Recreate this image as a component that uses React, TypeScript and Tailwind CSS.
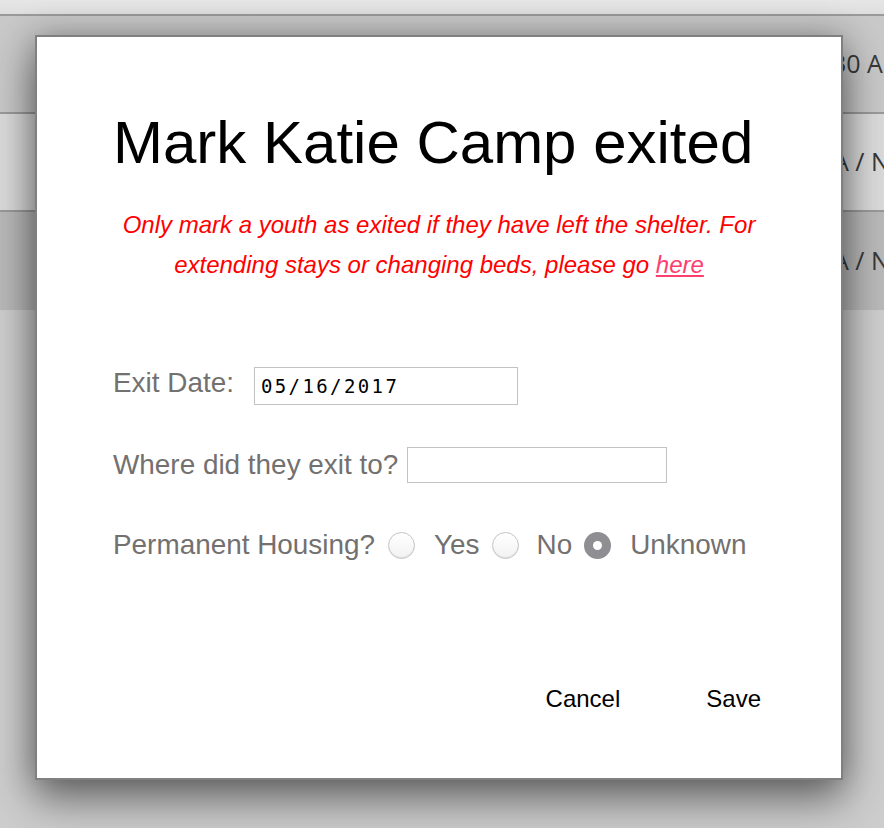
import React from "react";

function Radio({ checked }: { checked?: boolean }) {
  if (checked) {
    return (
      <span className="flex h-[27px] w-[27px] shrink-0 items-center justify-center rounded-full bg-[#8e8e93]">
        <span className="h-[9px] w-[9px] rounded-full bg-white" />
      </span>
    );
  }
  return (
    <span className="block h-[27px] w-[27px] shrink-0 rounded-full border border-[#c4c4c4] bg-gradient-to-b from-white to-[#f2f2f2] shadow-[inset_0_-1px_1px_rgba(0,0,0,0.08)]" />
  );
}

export default function App() {
  const bgText = "font-['Open_Sans',sans-serif] text-[25px] text-[#383838] whitespace-nowrap";
  return (
    <div className="relative h-[828px] w-[884px] overflow-hidden bg-[#cdcdcd] font-['Liberation_Sans',Arial,sans-serif]">
      {/* page behind overlay */}
      <div className="h-[14px] bg-gradient-to-b from-[#e6e6e6] to-[#dedede]" />
      <div className="h-[2px] bg-[#9a9a9a]" />
      <div className={`flex h-[96px] items-center bg-[#c8c8c8] pl-[832px] ${bgText}`}>30 AM</div>
      <div className="h-[2px] bg-[#9a9a9a]" />
      <div className={`flex h-[96px] items-center bg-[#dadada] pl-[805px] ${bgText}`}>N/A / N/A</div>
      <div className="h-[2px] bg-[#9a9a9a]" />
      <div className={`flex h-[98px] items-center bg-[#b9b9b9] pl-[805px] ${bgText}`}>N/A / N/A</div>
      <div className="h-[518px] bg-[#cdcdcd]" />

      {/* modal */}
      <div className="absolute left-[35px] top-[35px] flex h-[745px] w-[808px] flex-col border-2 border-[#808080] bg-white px-[76px] pt-[72px] shadow-[0_0_30px_rgba(0,0,0,0.25),0_20px_40px_rgba(0,0,0,0.45)]">
        <h1 className="text-[60px] leading-[68px] text-black">Mark Katie Camp exited</h1>
        <p className="mt-[28px] text-center text-[24px] italic leading-[40px] text-[#ff0000]">
          Only mark a youth as exited if they have left the shelter. For extending stays or changing beds, please go{" "}
          <a href="#" className="text-[#ff3d6e] underline">
            here
          </a>
        </p>

        <div className="mt-[81px] flex h-[40px] items-center text-[27.9px] leading-[32px] text-[#737070]">
          <span className="pb-[6px]">Exit Date:</span>
          <input
            readOnly
            value="05/16/2017"
            className="ml-[20px] h-[38px] w-[264px] border border-[#c2c2c2] bg-white pl-[6px] font-['DejaVu_Sans_Mono',monospace] text-[19px] tracking-[2.4px] text-black outline-none"
          />
        </div>

        <div className="mt-[39px] flex h-[40px] items-center text-[27.9px] leading-[32px] text-[#737070]">
          <span>Where did they exit to?</span>
          <input readOnly value="" className="ml-[9px] h-[36px] w-[260px] border border-[#c2c2c2] bg-white outline-none" />
        </div>

        <div className="mt-[40px] flex h-[40px] items-center text-[27.9px] leading-[32px] text-[#737070]">
          <span>Permanent Housing?</span>
          <span className="ml-[13px]"><Radio /></span>
          <span className="ml-[19px]">Yes</span>
          <span className="ml-[12px]"><Radio /></span>
          <span className="ml-[18px]">No</span>
          <span className="ml-[12px]"><Radio checked /></span>
          <span className="ml-[19px]">Unknown</span>
        </div>

        <div className="mt-[120px] flex justify-end gap-[86px] pr-[4px] text-[24px] leading-[28px] text-black">
          <button className="cursor-pointer">Cancel</button>
          <button className="cursor-pointer">Save</button>
        </div>
      </div>
    </div>
  );
}
